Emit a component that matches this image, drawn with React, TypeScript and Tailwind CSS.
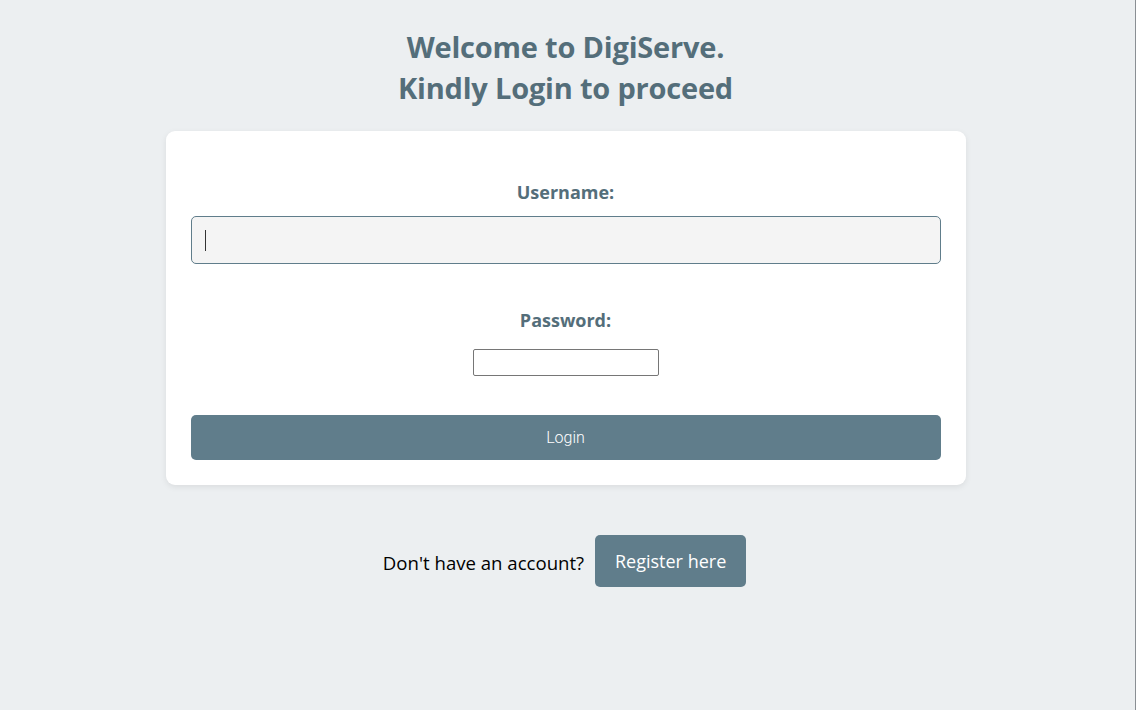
import React from 'react';

const App: React.FC = () => {
  return (
    <div className="min-h-[710px] w-full bg-[#eceff1] flex border-r border-[#8a8f94]" style={{ fontFamily: '"Open Sans", "Noto Sans", sans-serif' }}>
      <div className="flex-1 flex flex-col items-center pt-[26px] pr-[4px]">
        {/* Heading */}
        <h1 className="text-center text-[29px] leading-[41px] font-bold text-[#546e7a] tracking-[-0.2px]">
          Welcome to DigiServe.
          <br />
          Kindly Login to proceed
        </h1>

        {/* Login card */}
        <div className="mt-[23px] w-[800px] bg-white rounded-[9px] shadow-[0_2px_6px_rgba(0,0,0,0.08)] px-[25px] pt-[25px] pb-[25px] flex flex-col">
          <label className="mt-[24px] text-center text-[18px] leading-[24px] font-bold text-[#546e7a]">
            Username:
          </label>
          <div className="mt-[12px] h-[48px] rounded-[5px] border border-[#607d8b] bg-[#f4f4f4] flex items-center px-[13px]">
            <span className="block w-px h-[21px] bg-[#333]" />
          </div>

          <label className="mt-[44px] text-center text-[18px] leading-[24px] font-bold text-[#546e7a]">
            Password:
          </label>
          <div className="mt-[17px] flex justify-center">
            <input
              type="password"
              className="w-[186px] h-[27px] border border-[#767676] bg-white rounded-[2px] outline-none"
            />
          </div>

          <button
            className="mt-[39px] h-[45px] rounded-[5px] bg-[#607d8b] text-white text-[16px] font-light"
            style={{ fontFamily: 'Roboto, "Liberation Sans", sans-serif' }}
          >
            Login
          </button>
        </div>

        {/* Register row */}
        <div className="mt-[50px] flex items-center gap-[11px] pr-[2px]">
          <span className="text-[18.6px] text-black pt-[3px]">Don't have an account?</span>
          <button className="w-[151px] h-[52px] rounded-[5px] bg-[#607d8b] text-white text-[18px]">
            Register here
          </button>
        </div>
      </div>
    </div>
  );
};

export default App;
